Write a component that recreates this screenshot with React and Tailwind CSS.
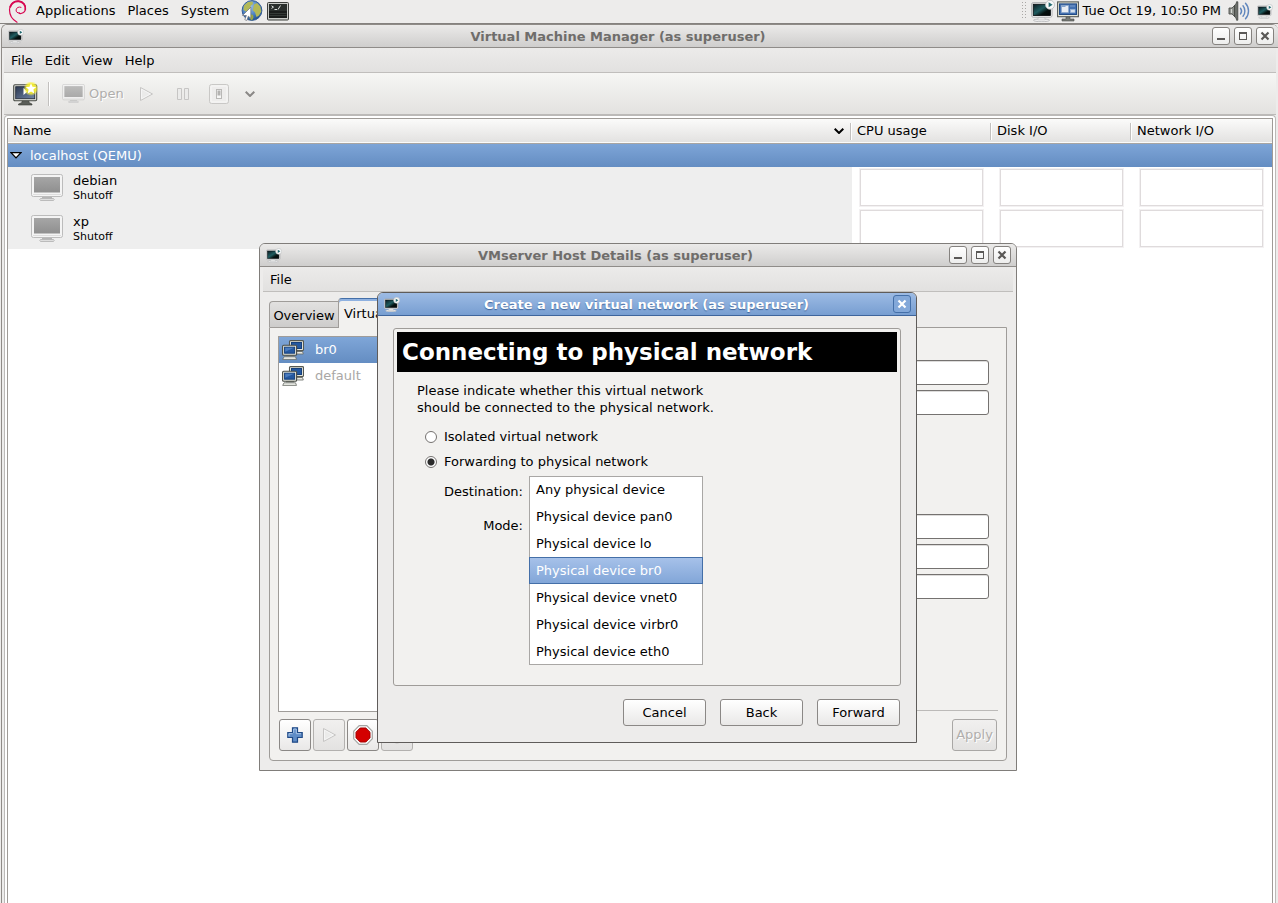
/*
  App.jsx — GNOME desktop with Virtual Machine Manager, the host details window
  and the "Create a new virtual network" assistant on top.
*/
import { useState } from "react";
import clsx from "clsx";

const DEVICES = [
  "Any physical device", "Physical device pan0", "Physical device lo", "Physical device br0",
  "Physical device vnet0", "Physical device virbr0", "Physical device eth0",
];
const GUESTS = [{ name: "debian", state: "Shutoff" }, { name: "xp", state: "Shutoff" }];
const NETWORKS = ["br0", "default"];

/* ---------- icons ---------- */

function VmmIcon({ className }) {
  return (
    <svg viewBox="0 0 24 22" className={className} aria-hidden="true">
      <defs>
        <linearGradient id="vmm" x1="0" y1="0" x2="1" y2="1">
          <stop offset="0" stopColor="#0b1a20" /><stop offset=".45" stopColor="#1f5c60" /><stop offset=".7" stopColor="#04100f" /><stop offset="1" stopColor="#020708" />
        </linearGradient>
      </defs>
      <ellipse cx="10.5" cy="20.3" rx="8" ry="1.4" fill="#f3f3f3" stroke="#a9abad" strokeWidth=".7" />
      <path d="M7.5 17h6l.8 3h-7.6z" fill="#e8e8e8" stroke="#b4b6b8" strokeWidth=".5" />
      <rect x=".6" y="2.6" width="20.400" height="14.6" rx="1.6" fill="#fafafa" stroke="#a7a9ab" strokeWidth=".9" />
      <rect x="2.200" y="4.200" width="17.2" height="11.4" fill="url(#vmm)" stroke="#050b0d" strokeWidth=".8" />
      <circle cx="19" cy="4.800" r="4.5" fill="#f7f8f8" stroke="#b5b8ba" strokeWidth=".8" />
      <path d="M17.6 2.3v5l4-2.5z" fill="#236a71" />
    </svg>
  );
}

function DebianSwirl() {
  return (
    <svg viewBox="0 0 20 23" className="h-[23px] w-5" fill="none" stroke="#d70751" strokeLinecap="round" aria-hidden="true">
      <path d="M11.4 12.9c-2.2.4-3.5-1.2-3.3-3 .3-2.4 2.8-3.4 4.9-2.6" strokeWidth="1" />
      <path d="M11.2 13.4c2.7.6 5.5-.9 6.1-3.6C18.200 5.400 15.500 1.400 11 .9 5.800.4 1.500 4.600 1.500 9.800c0 5.200 3.100 10 7.500 12.400" strokeWidth="1.200" />
      <path d="M17.300 9.400C17.800 5.300 14.900 1.900 10.800 1.500 7 1.200 3.600 3.400 2.300 6.900" strokeWidth="1.700" />
    </svg>
  );
}

function GlobeIcon() {
  return (
    <svg viewBox="0 0 22 22" className="h-[22px] w-[22px]" aria-hidden="true">
      <defs>
        <radialGradient id="globe" cx=".4" cy=".3" r=".75">
          <stop offset="0" stopColor="#9fc3ea" /><stop offset=".6" stopColor="#4a7fc0" /><stop offset="1" stopColor="#1f4a87" />
        </radialGradient>
      </defs>
      <circle cx="11" cy="10.500" r="9.900" fill="url(#globe)" stroke="#2b5590" strokeWidth=".9" />
      <path d="M3 5.500 7 2l4.500-.5L12 4 9.500 6l.5 2-3 1.500-1 2.500-3.500-2z" fill="#b3b957" />
      <path d="M13 4.500 16 3l3.300 3.400 1 5-2.300 4.100-2.500 1.500-1.500-4.500-2.200-2.200.7-3.300z" fill="#b3b957" />
      <path d="m9 14 3 1 .5 2.500-1.500 3-2.500-2z" fill="#9aa845" />
      <path d="M9.800 7.200v11l-2.500-2-1.500 4.300-2-.8 1.600-4.200H1.500z" fill="#fff" stroke="#6b6f76" strokeWidth=".7" />
    </svg>
  );
}

function TerminalIcon() {
  return (
    <svg viewBox="0 0 22 19" className="h-[19px] w-[22px]" aria-hidden="true">
      <rect x=".5" y=".5" width="21" height="17.500" rx="1" fill="#c9cbc7" stroke="#3c3e3b" />
      <rect x="2" y="2" width="18" height="14" fill="#2a2f2c" />
      <path d="M2 9h18v7H2z" fill="#1a1d1b" />
      <path d="M2.500 11.500h17M2.500 13.500h17" stroke="#414742" strokeWidth=".7" />
      <path d="m4.500 3.800 2 1.300-2 1.300M7.500 7.500h2.500M13.500 3.500l-2.500 4" fill="none" stroke="#dfe3df" strokeWidth="1" />
    </svg>
  );
}

function DisplayIcon() {
  return (
    <svg viewBox="0 0 22 21" className="h-[21px] w-[22px]" aria-hidden="true">
      <path d="M9 15h4v3h4v2H5v-2h4z" fill="#777a76" stroke="#4b4e4a" strokeWidth=".6" />
      <rect x=".6" y=".9" width="20.800" height="14.800" fill="#e7e9dc" stroke="#565955" strokeWidth="1.100" />
      <rect x="2.500" y="2.900" width="17" height="10.600" fill="#4471b0" stroke="#234b85" />
      <rect x="4.500" y="4.500" width="7" height="7" fill="#e8edf4" stroke="#8ea8ca" strokeWidth=".7" />
      <path d="M5 5.300h3.500" stroke="#6b8fc0" strokeWidth="1" />
      <rect x="13.500" y="8.500" width="4.500" height="3" fill="#d5e0ee" stroke="#9db8d8" strokeWidth=".6" />
      <path d="M13 5h5" stroke="#7d9fce" strokeWidth="1" />
    </svg>
  );
}

function SpeakerIcon() {
  return (
    <svg viewBox="0 0 22 20" className="h-5 w-[22px]" aria-hidden="true">
      <path d="M1 7h3l3-3v12l-3-3H1z" fill="#8b8e89" stroke="#4e514d" strokeWidth=".9" />
      <path d="M6.500 4.500C8 3 8.500 2 8.500.8h1.300v18.400H8.500c0-1.200-.5-2.300-2-3.700z" fill="#6b6e69" stroke="#40433f" strokeWidth=".8" />
      <path d="M3.500 8v4" stroke="#d7d9d5" strokeWidth="1.200" />
      <g fill="none" stroke="#5f86bd" strokeWidth="1.400" strokeLinecap="round">
        <path d="M12.500 7.200c1.300 1.700 1.300 4 0 5.700" /><path d="M15 4.800c2.500 3 2.500 7.500 0 10.500" /><path d="M17.500 2.200c4 4.300 4 11.300 0 15.600" />
      </g>
    </svg>
  );
}

function NewVmIcon() {
  return (
    <svg viewBox="0 0 25 24" className="h-6 w-[25px]" aria-hidden="true">
      <defs>
        <radialGradient id="glow"><stop offset="0" stopColor="#fff838" /><stop offset=".65" stopColor="#f6ee2a" stopOpacity=".9" /><stop offset="1" stopColor="#fbf55a" stopOpacity="0" /></radialGradient>
        <linearGradient id="newvm" x1="0" y1="0" x2="1" y2="1"><stop offset="0" stopColor="#2b3850" /><stop offset="1" stopColor="#7186a8" /></linearGradient>
      </defs>
      <path d="M9 18h7v2.500l3 1.500v1H5.500v-1L9 20.500z" fill="#5a5d58" stroke="#3a3c38" strokeWidth=".6" />
      <rect x=".7" y="2.700" width="23" height="16" rx="1.200" fill="#d8dad4" stroke="#484b46" strokeWidth="1.100" />
      <rect x="2.700" y="4.700" width="19" height="12" fill="url(#newvm)" stroke="#232a38" strokeWidth=".8" />
      <path d="M10.500 6v7l4-3.500z" fill="#fff" />
      <circle cx="18" cy="6.500" r="7.500" fill="url(#glow)" />
      <path d="m18 1.300 1.500 3.500 3.700.3-2.800 2.500.9 3.800-3.300-2-3.300 2 .9-3.800-2.800-2.500 3.700-.3z" fill="#fff" />
    </svg>
  );
}

function MonitorIcon({ className }) {
  return (
    <svg viewBox="0 0 32 27" className={className} aria-hidden="true">
      <defs><linearGradient id="screen" x1="0" y1="0" x2="0" y2="1"><stop offset="0" stopColor="#a6a6a6" /><stop offset="1" stopColor="#8f8f8f" /></linearGradient></defs>
      <path d="M11 23h10v1.500H11z" fill="#b5b5b5" />
      <path d="M9.500 24.500h13q1.500 1 0 2h-13q-1.500-1 0-2z" fill="#dedede" stroke="#b0b0b0" strokeWidth=".8" />
      <rect x=".5" y=".5" width="31" height="22" rx="1.800" fill="#f4f4f4" stroke="#bcbcbc" />
      <rect x="3" y="3" width="26" height="15.500" fill="url(#screen)" />
      <path d="M2 20.500h28" stroke="#dedede" />
    </svg>
  );
}

function PlayIcon({ className }) {
  return (
    <svg viewBox="0 0 15 16" className={className} aria-hidden="true">
      <path d="M1.500 1.500v13l12-6.500z" fill="#ebebea" stroke="#c6c5c4" strokeLinejoin="round" />
      <path d="M2.500 3.200v9.600l8.800-4.800z" fill="none" stroke="#f8f8f7" strokeWidth=".8" />
    </svg>
  );
}

function NetworkIcon() {
  return (
    <svg viewBox="0 0 22 20" className="h-5 w-[22px] shrink-0" aria-hidden="true">
      <path d="M11 11.500h9.500l.8 2.500H9.500z" fill="#e9eae4" stroke="#666964" strokeWidth=".8" />
      <rect x="7.500" y=".6" width="14" height="10" rx="1" fill="#e4e6dc" stroke="#555852" strokeWidth="1.100" />
      <rect x="9.500" y="2.500" width="10" height="6" fill="#2458a0" stroke="#16407c" />
      <path d="M4 14.500h8v2H4z" fill="#7c7f79" />
      <path d="M2 16.800h11.500l1 2.600H.700z" fill="#f0f1ec" stroke="#666964" strokeWidth=".8" />
      <rect x=".6" y="5.200" width="14" height="10" rx="1" fill="#e4e6dc" stroke="#4a4d48" strokeWidth="1.100" />
      <rect x="2.600" y="7.200" width="10" height="6" fill="#2458a0" stroke="#16407c" />
      <path d="M3.200 7.700h8.800l-8.800 4z" fill="#4a7cbe" />
    </svg>
  );
}

function StopSign() {
  return (
    <svg viewBox="0 0 20 20" className="h-5 w-5 shrink-0" aria-hidden="true">
      <path d="M6.200.7h7.600l5.500 5.500v7.600l-5.500 5.500H6.200L.7 13.800V6.200z" fill="#fafafa" stroke="#a5a5a3" strokeWidth="1.200" />
      <path d="M7.200 3h5.600L17 7.200v5.600L12.800 17H7.200L3 12.800V7.200z" fill="#d40000" stroke="#a40000" />
    </svg>
  );
}

function Chevron() {
  return (
    <svg viewBox="0 0 10 6" className="h-1.5 w-2.5" fill="none" stroke="currentColor" strokeWidth="2" aria-hidden="true"><path d="m.7.700 4.300 4.300L9.300.7" /></svg>
  );
}

function Glyph({ kind }) {
  return (
    <svg viewBox="0 0 10 10" className="h-[10px] w-[10px]" fill="none" stroke="currentColor" aria-hidden="true">
      {kind === "min" && <path d="M1 8h8" strokeWidth="2" />}
      {kind === "max" && <><rect x="1.500" y="1.500" width="7" height="7" /><path d="M1 2h8" strokeWidth="2" /></>}
      {kind === "close" && <path d="m1.500 1.500 7 7m0-7-7 7" strokeWidth="2.200" />}
    </svg>
  );
}

/* ---------- window parts ---------- */

const KINDS = { min: "Minimize", max: "Maximize", close: "Close" };

function TitleBar({ title, active, className }) {
  return (
    <header className={clsx("flex h-[23px] shrink-0 items-center rounded-t-[5px] border-b pl-1.5", className,
      active ? "border-[#3e659c] bg-linear-to-b from-[#9dbbe4] to-[#779ed1]" : "border-[#8f8c89] bg-linear-to-b from-[#ebeae9] to-[#cfcecd]")}>
      <VmmIcon className="h-[15px] w-4" />
      <h2 className={clsx("flex-1 pt-0.5 text-center text-[13px] font-bold leading-4", active ? "text-white [text-shadow:0_1px_1px_#3e659c]" : "text-[#6f6d6b]")}>{title}</h2>
      <div className="flex gap-1">
        {(active ? ["close"] : ["min", "max", "close"]).map((k) => (
          <button key={k} aria-label={KINDS[k]} className={clsx("flex h-[18px] w-[18px] items-center justify-center rounded-[3px] border",
            active ? "border-[#446fa8] bg-[#83a8d9] text-white" : "border-[#85827f] bg-linear-to-b from-white to-[#ededec] text-[#5a5856]")}>
            <Glyph kind={k} />
          </button>
        ))}
      </div>
    </header>
  );
}

function MenuBar({ items, className }) {
  return (
    <nav className={clsx("flex h-[25px] shrink-0 items-center gap-3 border-b border-[#c0bebc] bg-linear-to-b from-[#ecebea] to-[#e2e1e0] pl-[7px] pt-0.5", className)}>
      {items.map((m) => <button key={m}>{m}</button>)}
    </nav>
  );
}

const TOOL = "flex h-8 w-8 items-center justify-center rounded-[3px] border";
const TOOL_ON = "border-[#8b8886] bg-linear-to-b from-white to-[#e9e8e7]";
const TOOL_OFF = "border-[#b3b1af] bg-linear-to-b from-[#f1f0ef] to-[#e3e2e1]";
const ENTRY = "h-[25px] rounded-[3px] border border-[#757270] bg-white px-1.5 shadow-[inset_0_1px_0_#dddcdb]";

function Panel() {
  return (
    <div className="flex h-6 shrink-0 items-center border-b border-[#85827f] bg-[#edeceb] pb-px pl-2 pr-[5px]">
      <DebianSwirl />
      <nav className="ml-2 flex gap-3">
        <button>Applications</button><button>Places</button><button>System</button>
      </nav>
      <div className="ml-3 flex items-center gap-1">
        <button aria-label="Web browser"><GlobeIcon /></button>
        <button aria-label="Terminal"><TerminalIcon /></button>
      </div>
      <div className="ml-auto flex items-center">
        <svg viewBox="0 0 6 18" className="mr-1 h-[18px] w-1.5" aria-hidden="true">
          <path d="M1.500 0v18M4.500 0v18" stroke="#aaa8a6" strokeDasharray="1 2" />
        </svg>
        <VmmIcon className="mr-0.5 h-[22px] w-6" />
        <DisplayIcon />
        <time className="ml-1 mr-[7px]">Tue Oct 19, 10:50 PM</time>
        <SpeakerIcon />
        <VmmIcon className="ml-[7px] h-[15px] w-4" />
      </div>
    </div>
  );
}

function Toolbar() {
  return (
    <div className="flex h-[42px] shrink-0 items-center border-b border-[#bcbab8] bg-linear-to-b from-[#f6f6f4] to-[#e3e2e0] pl-[9px]">
      <button aria-label="New virtual machine"><NewVmIcon /></button>
      <span className="ml-2.5 h-6 w-0.5 border-l border-r border-l-[#c2c0be] border-r-white" />
      <button disabled className="ml-3 flex items-center gap-1 text-[#b0aeac] [text-shadow:1px_1px_0_#fff]">
        <MonitorIcon className="h-[19px] w-[23px] opacity-70" />Open
      </button>
      <button disabled aria-label="Run" className="ml-[15px]"><PlayIcon className="h-4 w-[15px]" /></button>
      <button disabled aria-label="Pause" className="ml-[22px]">
        <svg viewBox="0 0 14 14" className="h-3.5 w-3.5" aria-hidden="true">
          <path d="M1.500 1.500h4v11h-4zM8.500 1.500h4v11h-4z" fill="#ebebea" stroke="#c6c5c4" />
        </svg>
      </button>
      <button disabled aria-label="Shut down" className="ml-[19px]">
        <svg viewBox="0 0 20 20" className="h-5 w-5" aria-hidden="true">
          <rect x=".5" y=".5" width="19" height="19" rx="2" fill="#eeedec" stroke="#c9c8c6" />
          <rect x="2" y="2" width="16" height="16" rx="1" fill="none" stroke="#f8f8f7" />
          <rect x="7.500" y="5.500" width="5" height="9" fill="#f6f6f5" stroke="#b9b8b6" />
          <path d="M8.500 6.500h3v5h-3z" fill="#b4b3b1" />
        </svg>
      </button>
      <button aria-label="More shutdown options" className="ml-4 text-[#8a8886]"><Chevron /></button>
    </div>
  );
}

function GuestTable() {
  const th = "h-6 p-0 pt-px font-normal";
  const sep = "h-[17px] w-0.5 border-l border-r border-l-[#c2c0be] border-r-white";
  return (
    <div className="flex-1 rounded-t border-x border-t border-[#bcbab8] bg-white px-0.5 pt-0.5">
      <div className="h-full border-x border-t border-[#9f9b97] bg-white">
        <table className="w-full table-fixed border-collapse text-left">
          <colgroup><col /><col className="w-[140px]" /><col className="w-[140px]" /><col className="w-[140px]" /></colgroup>
          <thead>
            <tr className="border-b border-[#a8a5a2] bg-linear-to-b from-[#fbfbfa] to-[#e3e2e1]">
              <th className={th}><div className="flex items-center pl-[5px]">Name<span className="ml-auto mr-1.5"><Chevron /></span><span className={sep} /></div></th>
              <th className={th}><div className="flex items-center justify-between pl-[5px]">CPU usage<span className={sep} /></div></th>
              <th className={th}><div className="flex items-center justify-between pl-[5px]">Disk I/O<span className={sep} /></div></th>
              <th className={th}><div className="pl-[5px]">Network I/O</div></th>
            </tr>
          </thead>
          <tbody>
            <tr className="bg-linear-to-b from-[#7fa6d8] to-[#648dc2] text-white">
              <td colSpan={4} className="h-6 p-0 pt-px">
                <div className="flex items-center gap-2 pl-0.5">
                  <svg viewBox="0 0 12 7" className="h-[7px] w-3" aria-hidden="true"><path d="M1 .7h10L6 5.900z" fill="#fff" stroke="#000" strokeWidth="1.300" /></svg>
                  localhost (QEMU)
                </div>
              </td>
            </tr>
            {GUESTS.map((g) => (
              <tr key={g.name}>
                <td className="h-[41px] bg-[#eeeeee] p-0">
                  <div className="flex items-center gap-2.5 pl-[23px]">
                    <MonitorIcon className="h-[27px] w-8" />
                    <div><div className="leading-[15px]">{g.name}</div><div className="text-[11px] leading-[15px]">{g.state}</div></div>
                  </div>
                </td>
                {["cpu", "disk", "net"].map((k) => (
                  <td key={k} className="p-0 pl-[7px]"><div className="h-[39px] w-[125px] border border-[#f3f1f2] bg-white shadow-[inset_0_0_0_1px_#dfdbdc]" /></td>
                ))}
              </tr>
            ))}
          </tbody>
        </table>
      </div>
    </div>
  );
}

function HostDetails() {
  return (
    <section className="absolute left-[259px] top-[243px] w-[758px] rounded-t-md border border-[#807d7a] bg-[#edeceb]">
      <TitleBar title="VMserver Host Details (as superuser)" className="pr-[5px]" />
      <MenuBar items={["File"]} className="mx-[3px]" />
      <div className="px-[9px] pb-[9px] pt-1.5">
        <div role="tablist" className="flex items-end">
          <button role="tab" className="h-[26px] w-[69px] whitespace-nowrap rounded-tl border-l border-t border-[#9f9c99] bg-linear-to-b from-[#e2e1e0] to-[#cdcccb] pt-0.5 text-center">Overview</button>
          <button role="tab" aria-selected="true" className="relative -mb-px h-[30px] rounded-t border border-b-0 border-[#9f9c99] border-t-[#446fa8] bg-[#f2f1ef] px-[5px] shadow-[inset_0_2px_0_#8fb1e0]">Virtual Networks</button>
        </div>
        <div className="rounded-b border border-[#9f9c99] bg-[#f2f1ef] px-2 pb-[9px] pt-2">
          <div className="flex gap-4">
            <div className="w-[220px]">
              <ul className="h-[376px] border border-[#9f9c99] bg-white">
                {NETWORKS.map((n, i) => (
                  <li key={n} className={clsx("flex h-[26px] items-center gap-[11px] pl-[3px]", i === 0 ? "bg-linear-to-b from-[#7fa6d8] to-[#648dc2] text-white" : "text-[#a9a7a5]")}>
                    <NetworkIcon />{n}
                  </li>
                ))}
              </ul>
              <div className="mt-[7px] flex gap-0.5 pl-px">
                <button aria-label="Add network" className={clsx(TOOL, TOOL_ON)}>
                  <svg viewBox="0 0 16 16" className="h-4 w-4" aria-hidden="true">
                    <path d="M5.500.8h5v4.700h4.700v5h-4.700v4.700h-5v-4.700H.8v-5h4.700z" fill="#5f8cc6" stroke="#204a87" strokeWidth="1.200" />
                    <path d="M6.700 5.900V2h2.600v4.700H14M2 9.300V6.700h3.500" fill="none" stroke="#a8c4e6" />
                  </svg>
                </button>
                <button disabled aria-label="Start network" className={clsx(TOOL, TOOL_OFF)}><PlayIcon className="h-4 w-[15px]" /></button>
                <button aria-label="Stop network" className={clsx(TOOL, TOOL_ON)}><StopSign /></button>
                <button disabled aria-label="Delete network" className={clsx(TOOL, TOOL_OFF)}>
                  <svg viewBox="0 0 18 18" className="h-[18px] w-[18px]" aria-hidden="true"><circle cx="9" cy="9" r="8" fill="#d6d4d3" stroke="#bebcba" /></svg>
                </button>
              </div>
            </div>
            <div className="flex flex-1 flex-col pt-6">
              <div className="mr-[9px] flex flex-col gap-[5px]">
                <input aria-label="Network name" className={ENTRY} /><input aria-label="Device" className={ENTRY} />
              </div>
              <div className="mr-[9px] mt-[99px] flex flex-col gap-[5px]">
                <input aria-label="Network" className={ENTRY} /><input aria-label="DHCP start" className={ENTRY} /><input aria-label="DHCP end" className={ENTRY} />
              </div>
              <div className="mt-auto flex justify-end border-t border-[#bcbab8] pr-px pt-2">
                <button disabled className="h-8 w-[45px] rounded-[3px] border border-[#a9a7a5] bg-linear-to-b from-[#f1f0ef] to-[#e3e2e1] text-[#b0aeac] [text-shadow:1px_1px_0_#fff]">Apply</button>
              </div>
            </div>
          </div>
        </div>
      </div>
    </section>
  );
}

function Radio({ label, checked, onChange }) {
  return (
    <label className="flex h-[25px] items-center gap-[7px]">
      <input type="radio" name="forwarding" checked={checked} onChange={onChange}
        className="h-3 w-3 appearance-none rounded-full border border-[#757270] bg-white checked:bg-radial checked:from-[#2b2b2b] checked:from-[3px] checked:to-white checked:to-[4px]" />
      {label}
    </label>
  );
}

function NetworkAssistant() {
  const [forward, setForward] = useState(true);
  const [device, setDevice] = useState("Physical device br0");
  return (
    <section className="absolute left-[377px] top-[292px] w-[540px] rounded-t-md border border-[#5f5c5a] bg-[#edeceb]">
      <TitleBar active title="Create a new virtual network (as superuser)" className="pr-[5px]" />
      <div className="px-[15px] pb-4 pt-3">
        <div className="min-h-[358px] rounded-[3px] border border-[#9f9c99] bg-[#f2f1ef] p-[3px]">
          <h1 className="bg-black pl-[5px] text-[23px] font-bold leading-10 text-white">Connecting to physical network</h1>
          <div className="px-5 pt-2.5">
            <p className="leading-[17px]">Please indicate whether this virtual network<br />should be connected to the physical network.</p>
            <div className="mt-2 pl-2">
              <Radio label="Isolated virtual network" checked={!forward} onChange={() => setForward(false)} />
              <Radio label="Forwarding to physical network" checked={forward} onChange={() => setForward(true)} />
            </div>
            <div className="mt-0.5 grid grid-cols-[106px_174px] gap-x-1.5 gap-y-0.5">
              <label htmlFor="destination" className="text-right leading-8">Destination:</label>
              {/* opened list, lies over the Mode row */}
              <div className="relative">
                <select id="destination" size={DEVICES.length} value={device} onChange={(e) => setDevice(e.target.value)}
                  className="absolute left-0 top-0 z-10 h-[189px] w-[174px] appearance-none overflow-hidden bg-white p-0 outline-none">
                  {DEVICES.map((d) => (
                    <option key={d} className="box-border h-[27px] min-h-0 border-x border-[#a9a7a5] px-1.5 pb-0 pt-1.5 first:border-t first:pt-[5px] last:border-b checked:border checked:border-[#446fa8] checked:bg-linear-to-b checked:from-[#a6c1e9] checked:to-[#82a6d8] checked:pt-[5px] checked:text-white">{d}</option>
                  ))}
                </select>
              </div>
              <label htmlFor="mode" className="text-right leading-8">Mode:</label>
              <select id="mode" className="rounded-[3px] border border-[#8b8886] bg-white" />
            </div>
          </div>
        </div>
        <div className="mt-[13px] flex justify-end gap-3.5 pr-px">
          {["Cancel", "Back", "Forward"].map((b) => (
            <button key={b} className="h-[27px] w-[83px] rounded-[3px] border border-[#8b8886] bg-linear-to-b from-white to-[#e9e8e7]">{b}</button>
          ))}
        </div>
      </div>
    </section>
  );
}

export default function App() {
  return (
    <div className="relative flex h-screen flex-col overflow-hidden bg-[#edeceb] font-['DejaVu_Sans',sans-serif] text-[13px] leading-4 text-black">
      <Panel />
      <main className="ml-px flex flex-1 flex-col rounded-t-md border-l border-t border-[#8f8b87]">
        <TitleBar title="Virtual Machine Manager (as superuser)" className="pr-1" />
        <div className="ml-0.5 mr-0.5 flex flex-1 flex-col">
          <MenuBar items={["File", "Edit", "View", "Help"]} />
          <Toolbar />
          <GuestTable />
        </div>
      </main>
      <HostDetails />
      <NetworkAssistant />
    </div>
  );
}
